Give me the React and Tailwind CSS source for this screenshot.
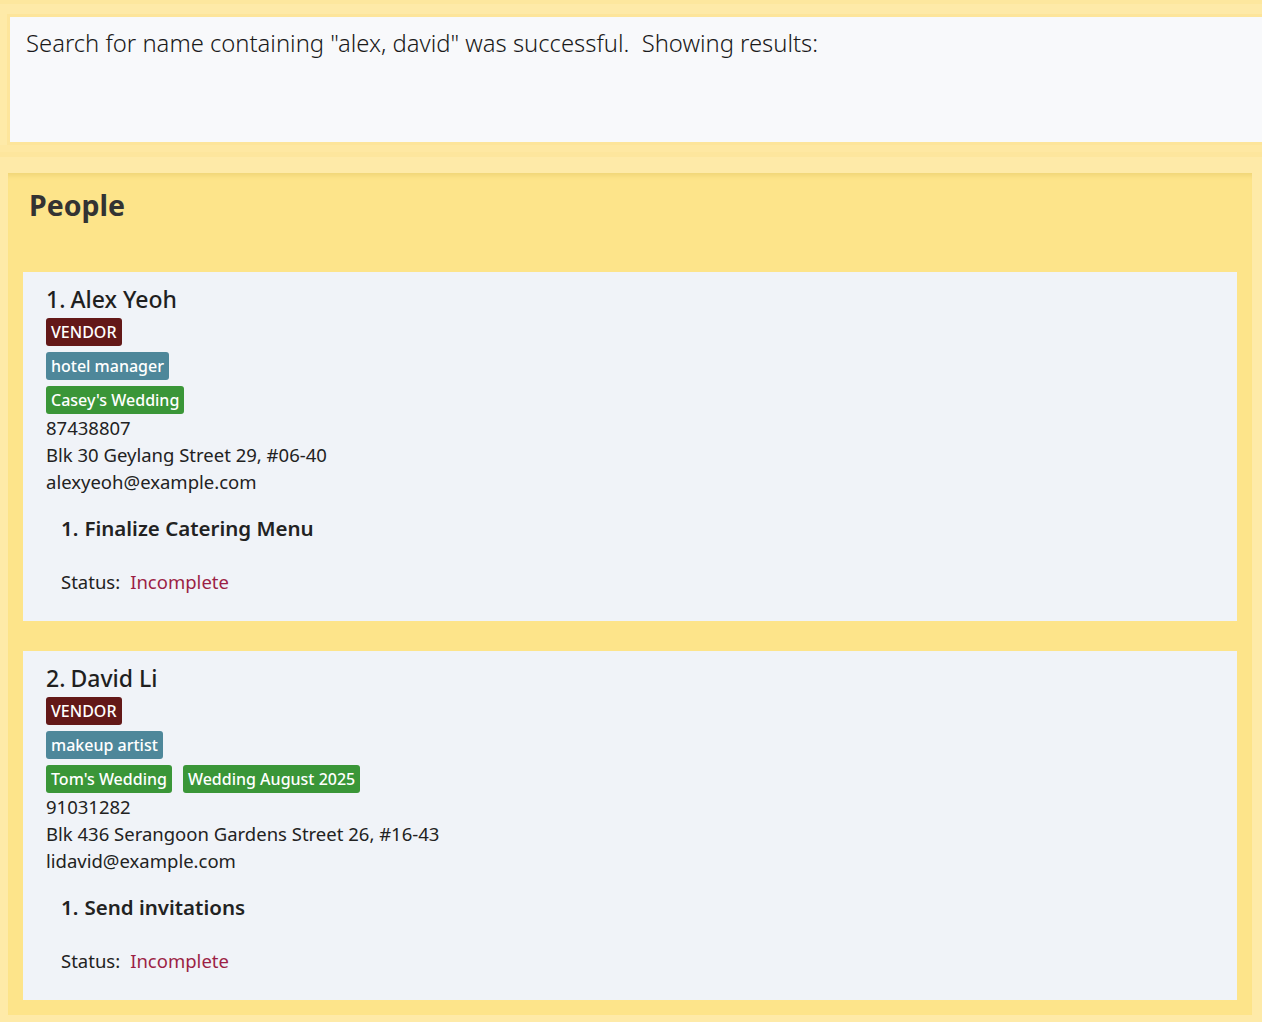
import React from "react";

const FONT = { fontFamily: '"Noto Sans", "Open Sans", sans-serif' };

function Tag({ children, color }) {
  return (
    <span
      className={`inline-flex h-[28px] items-center rounded-[3px] px-[5px] text-[16px] font-medium text-white ${color}`}
    >
      {children}
    </span>
  );
}

function Card({ index, name, roles, events, phone, address, email, task }) {
  return (
    <div className="bg-[#f0f3f8] pl-[23px] pt-[13px] pb-[25px]">
      <div className="flex h-[28px] items-center text-[23px] font-medium text-[#1f1f1f]">
        <span className="mr-[5px]">{index}.</span>
        <span>{name}</span>
      </div>
      <div className="mt-[5px] flex flex-col gap-[6px]">
        <div className="flex">
          <Tag color="bg-[#631818]">VENDOR</Tag>
        </div>
        <div className="flex gap-[11px]">
          {roles.map((r) => (
            <Tag key={r} color="bg-[#4e879a]">
              {r}
            </Tag>
          ))}
        </div>
        <div className="flex gap-[11px]">
          {events.map((e) => (
            <Tag key={e} color="bg-[#3a9638]">
              {e}
            </Tag>
          ))}
        </div>
      </div>
      <div className="text-[18.5px] leading-[27px] text-[#222]">
        <div>{phone}</div>
        <div>{address}</div>
        <div>{email}</div>
      </div>
      <div className="mt-[19px] pl-[15px]">
        <div className="flex h-[28px] items-center text-[20.5px] font-semibold text-[#222]">
          <span className="mr-[6px]">1.</span>
          <span>{task}</span>
        </div>
        <div className="mt-[26px] flex h-[28px] items-center text-[18.5px] text-[#222]">
          <span>Status:</span>
          <span className="ml-[10px] text-[#9c1f45]">Incomplete</span>
        </div>
      </div>
    </div>
  );
}

export default function App() {
  return (
    <div className="min-h-[1022px] w-[1262px] overflow-hidden bg-[#feeaa8]" style={FONT}>
      <div className="h-[4px] bg-[#fde79e]" />
      <div className="pt-[10px] pl-[7px]">
        <div className="mr-[-10px] h-[131px] border-[3px] border-[#fde59b] bg-[#f8f9fb] pl-[16px] pt-[9px]">
          <div className="text-[23.8px] font-light text-[#1a1a1a]">
            Search for name containing "alex, david" was successful.&nbsp; Showing results:
          </div>
        </div>
      </div>
      <div className="h-[7px] bg-[#fee8a2]" />
      <div className="h-[5px] bg-[#fde69d]" />
      <div className="h-[16px]" />
      <div className="ml-[8px] w-[1244px] bg-[#fde48a] shadow-[inset_0_6px_4px_-3px_#f1d678]">
        <div className="h-[99px] pl-[21px] pt-[11px]">
          <div className="text-[28.5px] font-bold text-[#333]">People</div>
        </div>
        <div className="flex flex-col gap-[30px] px-[15px] pb-[15px]">
          <Card
            index={1}
            name="Alex Yeoh"
            roles={["hotel manager"]}
            events={["Casey's Wedding"]}
            phone="87438807"
            address="Blk 30 Geylang Street 29, #06-40"
            email="alexyeoh@example.com"
            task="Finalize Catering Menu"
          />
          <Card
            index={2}
            name="David Li"
            roles={["makeup artist"]}
            events={["Tom's Wedding", "Wedding August 2025"]}
            phone="91031282"
            address="Blk 436 Serangoon Gardens Street 26, #16-43"
            email="lidavid@example.com"
            task="Send invitations"
          />
        </div>
      </div>
    </div>
  );
}
